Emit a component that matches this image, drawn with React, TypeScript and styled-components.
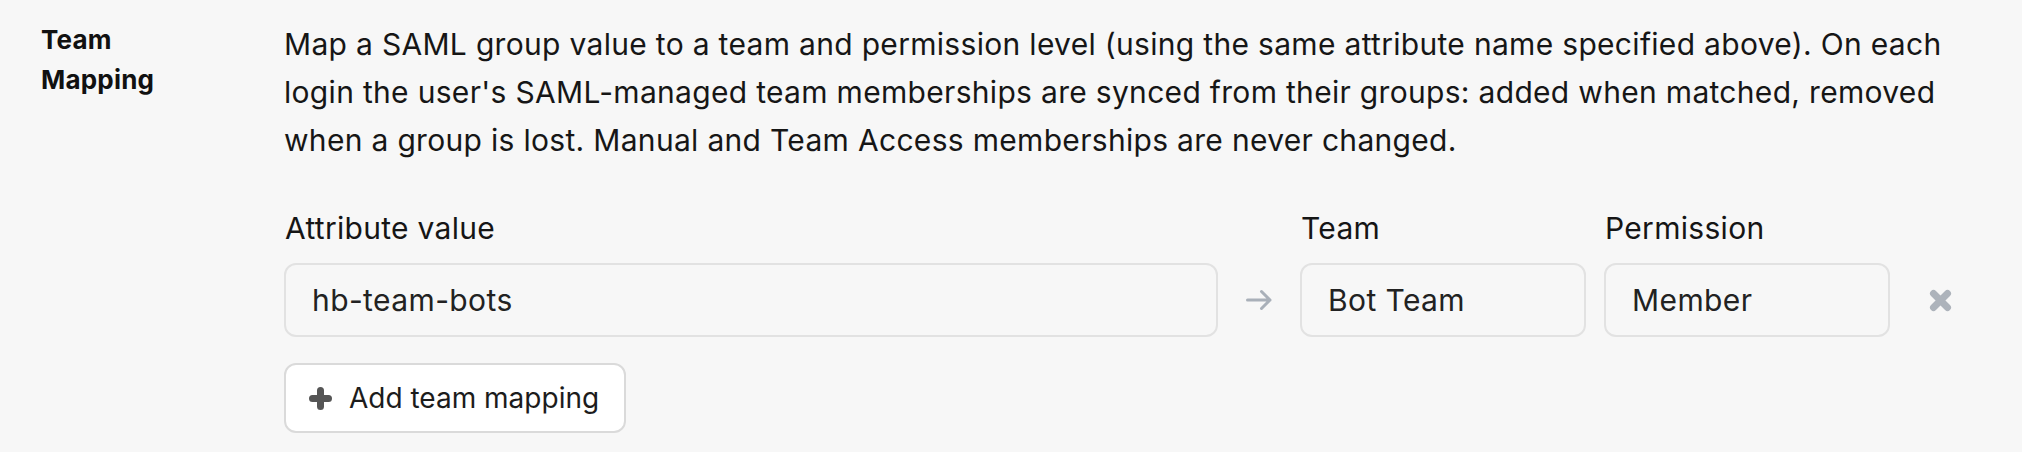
import React from "react";
import styled, { createGlobalStyle } from "styled-components";

const GlobalStyle = createGlobalStyle`
  html, body {
    margin: 0;
    padding: 0;
    background: #f7f7f7;
  }
  body {
    font-family: Inter, "Noto Sans", "Liberation Sans", sans-serif;
    color: #111111;
  }
`;

const Page = styled.div`
  width: 2022px;
  height: 452px;
  box-sizing: border-box;
  padding: 20px 50px 0 41px;
  background: #f7f7f7;
`;

const Section = styled.section`
  display: grid;
  grid-template-columns: 243px 1fr;
  align-items: start;
`;

const SectionLabel = styled.div`
  font-size: 26px;
  line-height: 40px;
  font-weight: 700;
  letter-spacing: 0.2px;
  color: #111111;
  width: 140px;
`;

const Content = styled.div`
  display: flex;
  flex-direction: column;
`;

const Description = styled.p`
  margin: 0;
  font-size: 30px;
  line-height: 48px;
  letter-spacing: 0.31px;
  color: #161616;
`;

const MappingGrid = styled.div`
  margin-top: 44px;
  display: grid;
  grid-template-columns: 1fr 46px 286px 286px 64px;
  column-gap: 18px;
  row-gap: 15px;
  align-items: center;
`;

const FieldLabel = styled.div<{ $col: number }>`
  grid-column: ${(p) => p.$col};
  font-size: 30px;
  line-height: 40px;
  letter-spacing: 0.3px;
  color: #151515;
  padding-left: 1px;
`;

const Field = styled.div<{ $col: number }>`
  grid-column: ${(p) => p.$col};
  box-sizing: border-box;
  height: 74px;
  display: flex;
  align-items: center;
  padding: 0 26px;
  border: 2px solid #e2e2e2;
  border-radius: 12px;
  background: #f7f7f7;
  font-size: 30px;
  letter-spacing: 0.4px;
  color: #222222;
`;

const ArrowCell = styled.div`
  grid-column: 2;
  display: flex;
  justify-content: center;
  align-items: center;
  height: 74px;
  color: #a9b0b9;
`;

const RemoveButton = styled.button`
  grid-column: 5;
  display: flex;
  justify-content: center;
  align-items: center;
  height: 74px;
  padding: 0;
  border: none;
  background: transparent;
  color: #adb3bb;
  cursor: pointer;
`;

const AddButton = styled.button`
  margin-top: 26px;
  align-self: flex-start;
  box-sizing: border-box;
  height: 70px;
  display: inline-flex;
  align-items: center;
  gap: 17px;
  padding: 0 25px 0 23px;
  background: #ffffff;
  border: 2px solid #dadada;
  border-radius: 12px;
  font-family: Inter, "Noto Sans", "Liberation Sans", sans-serif;
  font-size: 28px;
  letter-spacing: 0;
  color: #1c1c1c;
  cursor: pointer;
`;

const PlusIcon = () => (
  <svg width="23" height="23" viewBox="0 0 23 23" aria-hidden="true">
    <path
      d="M11.5 3.5 V19.5 M3.5 11.5 H19.5"
      stroke="#555555"
      strokeWidth="7"
      strokeLinecap="round"
    />
  </svg>
);

const ArrowIcon = () => (
  <svg width="26" height="22" viewBox="0 0 26 22" aria-hidden="true">
    <path
      d="M1.5 11 H24 M15.5 2.5 L24 11 L15.5 19.5"
      stroke="currentColor"
      strokeWidth="3"
      fill="none"
      strokeLinecap="round"
      strokeLinejoin="round"
    />
  </svg>
);

const CloseIcon = () => (
  <svg width="23" height="23" viewBox="0 0 23 23" aria-hidden="true">
    <path
      d="M4.5 4.5 L18.5 18.5 M18.5 4.5 L4.5 18.5"
      stroke="currentColor"
      strokeWidth="7"
      strokeLinecap="round"
    />
  </svg>
);

export default function App() {
  return (
    <>
      <GlobalStyle />
      <Page>
        <Section>
          <SectionLabel>Team Mapping</SectionLabel>
          <Content>
            <Description>
              Map a SAML group value to a team and permission level (using the same attribute name
              specified above). On each login the user's SAML-managed team memberships are synced
              from their groups: added when matched, removed when a group is lost. Manual and Team
              Access memberships are never changed.
            </Description>
            <MappingGrid>
              <FieldLabel $col={1}>Attribute value</FieldLabel>
              <FieldLabel $col={3}>Team</FieldLabel>
              <FieldLabel $col={4}>Permission</FieldLabel>
              <Field $col={1}>hb-team-bots</Field>
              <ArrowCell>
                <ArrowIcon />
              </ArrowCell>
              <Field $col={3}>Bot Team</Field>
              <Field $col={4}>Member</Field>
              <RemoveButton aria-label="Remove mapping">
                <CloseIcon />
              </RemoveButton>
            </MappingGrid>
            <AddButton>
              <PlusIcon />
              Add team mapping
            </AddButton>
          </Content>
        </Section>
      </Page>
    </>
  );
}
